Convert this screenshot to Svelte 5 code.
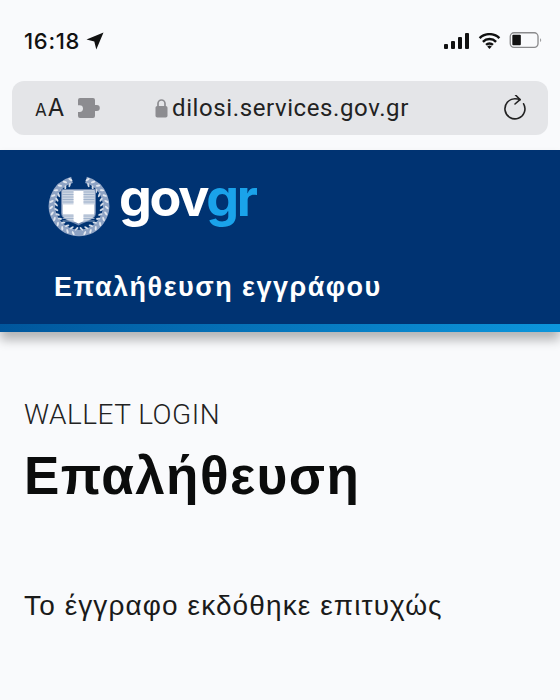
<script lang="ts">
  const laurelLeaves = Array.from({ length: 13 }, (_, i) => i);
  const stripes = [16, 18.5, 21, 23.5, 26, 40, 42.5, 45];
</script>

<div class="page">
  <div class="status">
    <div class="time">
      <span>16:18</span>
      <svg class="arrow" viewBox="0 0 18 18"><path d="M17.5.5 .5 7.6l7.8 2 2 7.9Z" fill="#111" /></svg>
    </div>
    <div class="status-icons">
      <svg class="signal" viewBox="0 0 26 16">
        <rect x="0" y="11" width="4" height="5" rx="1" />
        <rect x="7" y="8" width="4" height="8" rx="1" />
        <rect x="14" y="4" width="4" height="12" rx="1" />
        <rect x="21" y="0" width="4" height="16" rx="1" />
      </svg>
      <svg class="wifi" viewBox="0 0 24 17">
        <path d="M1.5 5.5a15 15 0 0 1 21 0M5 9.3a10 10 0 0 1 14 0M8.4 12.6a5 5 0 0 1 7.2 0" fill="none" stroke="#111" stroke-width="2.6" />
        <path d="M12 17l-2.4-2.6a3.4 3.4 0 0 1 4.8 0Z" fill="#111" />
      </svg>
      <svg class="battery" viewBox="0 0 36 18">
        <rect x="0.8" y="0.8" width="29.4" height="15.4" rx="4" fill="none" stroke="#8a8a8c" stroke-width="1.4" />
        <rect x="3" y="3" width="9" height="11" rx="1" fill="#111" />
        <path d="M32.5 6.5c1.4.4 1.4 3.6 0 4Z" fill="#8a8a8c" />
      </svg>
    </div>
  </div>

  <div class="urlbar">
    <div class="aa"><span class="small">A</span><span>A</span></div>
    <svg class="puzzle" viewBox="0 0 23 20">
      <path d="M2 0h13a2 2 0 0 1 2 2v5h1.800a3 3 0 1 1 0 6H17v5a2 2 0 0 1-2 2H2a2 2 0 0 1-2-2v-4h1.600a3.400 3.400 0 1 0 0-6.800H0V2a2 2 0 0 1 2-2Z" fill="#8c8c90" />
    </svg>
    <div class="address">
      <svg class="lock" viewBox="0 0 13 20">
        <path d="M3 9V5.500a3.500 3.500 0 0 1 7 0V9" fill="none" stroke="#8c8c90" stroke-width="1.7" />
        <rect x="0.5" y="8" width="12" height="11.5" rx="1.8" fill="#8c8c90" />
      </svg>
      <span>dilosi.services.gov.gr</span>
    </div>
    <svg class="reload" viewBox="0 -1 24 27">
      <path d="M17 3.600C16 3.200 13.500 2.800 12 2.800A10 10 0 1 0 20.600 7.800" fill="none" stroke="#222" stroke-width="1.6" stroke-linecap="round" />
      <path d="M12.500 -1 17 3.600 12 8" fill="none" stroke="#222" stroke-width="1.6" stroke-linecap="round" stroke-linejoin="round" />
    </svg>
  </div>

  <header class="banner">
    <div class="brand">
      <svg class="emblem" viewBox="0 0 62 62">
        <path d="M24 3.800A27 27 0 1 0 38 3.800" fill="none" stroke="#8ea3c4" stroke-width="6.500" />
        {#each laurelLeaves as leaf}
          {#each [1, -1] as side}
            <ellipse cx="31" cy="2.200" rx="1" ry="2.300" fill="#e3e8f0" transform={`rotate(${side * (leaf * 12.500 + 18)} 31 30) rotate(${side * 40} 31 2.200)`} />
            <ellipse cx="31" cy="7" rx="1" ry="2.300" fill="#d3dbe7" transform={`rotate(${side * (leaf * 12.500 + 24)} 31 30) rotate(${side * -40} 31 7)`} />
          {/each}
        {/each}
        <path d="M13 13h35v24c0 7-10 8-17.500 12.500C23 45 13 44 13 37Z" fill="#6f88b0" />
        <path d="M14.500 14.500h32V37c0 6-9 7-16 10.500C23.500 44 14.500 43 14.500 37Z" fill="#fff" />
        <path d="M14.500 14.500h11v14h-11Zm21 0h11v14h-11ZM14.500 38h11v8c-4.500-1.500-11-3.500-11-8Zm21 0h11c0 4.500-6.500 6.500-11 8Z" fill="#cdd6e3" />
        {#each stripes as y}
          <path d={`M14.500 ${y}H25.500M35.500 ${y}H46.500`} stroke="#9cafc9" stroke-width="0.9" />
        {/each}
      </svg>
      <div class="wordmark">gov<span>gr</span></div>
    </div>
    <div class="banner-title">Επαλήθευση εγγράφου</div>
  </header>

  <main class="content">
    <div class="caption">WALLET LOGIN</div>
    <h1>Επαλήθευση</h1>
    <p>Το έγγραφο εκδόθηκε επιτυχώς</p>
  </main>
</div>

<style>
  :global(body) {
    margin: 0;
    background: #f9fafc;
  }

  .page {
    width: 560px;
    height: 700px;
    overflow: hidden;
    background: #f9fafc;
    font-family: Roboto, "Liberation Sans", sans-serif;
    color: #111;
  }

  .status {
    height: 81px;
    box-sizing: border-box;
    padding: 29px 16px 0 24px;
    display: flex;
    justify-content: space-between;
    align-items: flex-start;
  }

  .time {
    display: flex;
    align-items: center;
    gap: 6px;
    font-family: Inter, sans-serif;
    font-size: 22px;
    font-weight: 500;
    line-height: 24px;
    letter-spacing: 0.7px;
  }

  .arrow {
    width: 18px;
    height: 18px;
  }

  .status-icons {
    display: flex;
    align-items: center;
    gap: 8px;
    margin-top: 3px;
  }

  .signal {
    width: 26px;
    height: 16px;
    fill: #111;
  }

  .wifi {
    width: 23px;
    height: 16px;
  }

  .battery {
    width: 35px;
    height: 17px;
  }

  .urlbar {
    height: 54px;
    margin: 0 12px;
    border-radius: 12px;
    background: #e4e5e8;
    display: flex;
    align-items: center;
    padding: 0 21px 0 23px;
    color: #222;
  }

  .aa {
    font-family: Inter, sans-serif;
    font-size: 24px;
    line-height: 30px;
    width: 43px;
    display: flex;
    align-items: baseline;
    padding-top: 2px;
  }

  .aa .small {
    font-size: 17px;
    margin-right: 1px;
  }

  .puzzle {
    width: 23px;
    height: 20px;
  }

  .address {
    margin-left: 54px;
    display: flex;
    align-items: center;
    gap: 4px;
    font-size: 24px;
    letter-spacing: 0.6px;
    flex: 1;
  }

  .lock {
    width: 13px;
    height: 20px;
  }

  .reload {
    width: 24px;
    height: 27px;
  }

  .banner {
    margin-top: 15px;
    height: 182px;
    box-sizing: border-box;
    background: #003372;
    border-bottom: 8px solid transparent;
    border-image: linear-gradient(90deg, #00569c, #0c96dc) 1;
    box-shadow: 0 8px 10px rgba(0, 0, 0, 0.28);
    padding: 26px 0 0 48px;
  }

  .brand {
    display: flex;
    align-items: flex-start;
    gap: 9px;
  }

  .emblem {
    width: 62px;
    height: 62px;
    flex: none;
  }

  .wordmark {
    font-family: Inter, sans-serif;
    font-size: 52px;
    font-weight: 700;
    line-height: 50px;
    letter-spacing: -2.3px;
    color: #fff;
    margin-top: -3px;
  }

  .wordmark span {
    color: #1aa3ea;
  }

  .banner-title {
    margin: 34px 0 0 6px;
    font-family: "Liberation Sans", sans-serif;
    font-size: 27px;
    font-weight: 700;
    line-height: 30px;
    letter-spacing: 1.5px;
    color: #fff;
  }

  .content {
    padding: 68px 24px 0;
  }

  .caption {
    font-size: 28px;
    font-weight: 300;
    line-height: 30px;
    letter-spacing: 0.5px;
    color: #222;
  }

  h1 {
    margin: 16px 0 0;
    font-family: "Liberation Sans", sans-serif;
    font-size: 53px;
    font-weight: 700;
    line-height: 60px;
    letter-spacing: 1.4px;
    color: #0b0c0c;
  }

  p {
    margin: 84px 0 0;
    font-family: "Liberation Sans", sans-serif;
    font-size: 28px;
    line-height: 32px;
    letter-spacing: 1.1px;
    color: #1a1a1a;
  }
</style>
